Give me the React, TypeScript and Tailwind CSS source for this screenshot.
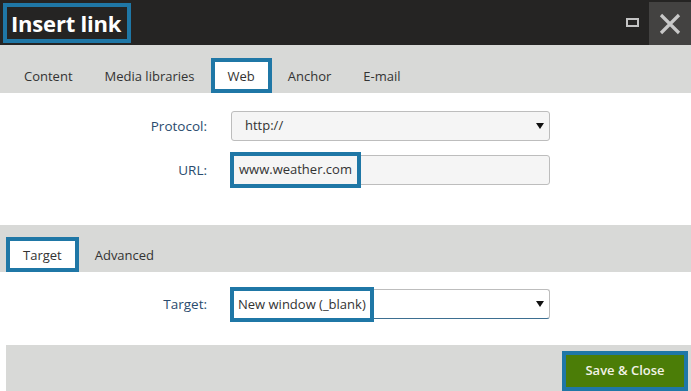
const font = { fontFamily: '"Open Sans", "Noto Sans", sans-serif' };

function Tab({ label, active }: { label: string; active?: boolean }) {
  return (
    <div
      className={`h-[35px] flex items-center pt-[3px] text-[13px] text-[#333] ${
        active ? 'bg-white border-4 border-[#1f77a6] px-[13px]' : 'px-[16px]'
      }`}
    >
      {label}
    </div>
  );
}

function Caret() {
  return (
    <svg width="8" height="6" viewBox="0 0 8 6" className="absolute right-[6px] top-[12px]">
      <path d="M0 0 H8 L4 6 Z" fill="#111" />
    </svg>
  );
}

function Row({ label, children }: { label: string; children: React.ReactNode }) {
  return (
    <div className="flex items-center h-[30px]">
      <div className="w-[207px] text-right text-[13.5px] text-[#2a4b6e]">{label}</div>
      <div className="ml-[24px] relative">{children}</div>
    </div>
  );
}

export default function App() {
  return (
    <div className="w-[691px] h-[391px] bg-white overflow-hidden flex flex-col" style={font}>
      {/* header */}
      <div className="h-[45px] bg-[#252423] flex items-start shrink-0">
        <div className="mt-[3px] ml-[3px] h-[40px] border-4 border-[#1f77a6] flex items-center pl-[4px] pr-[6px]">
          <span className="text-white font-bold text-[22px] leading-none tracking-[-0.2px]">Insert link</span>
        </div>
        <div className="flex-1" />
        <div className="h-[45px] flex items-center mr-[10px]">
          <div className="w-[13px] h-[9px] border-2 border-[#c4c4c4]" />
        </div>
        <div className="mt-[2px] w-[42px] h-[43px] bg-[#434241] flex items-center justify-center">
          <svg width="22" height="22" viewBox="0 0 22 22">
            <path d="M2 2 L20 20 M20 2 L2 20" stroke="#c8c8c8" strokeWidth="3.2" />
          </svg>
        </div>
      </div>

      {/* tabs */}
      <div className="h-[48px] bg-[#d8d9d7] flex items-end pl-[8px] shrink-0">
        <Tab label="Content" />
        <Tab label="Media libraries" />
        <Tab label="Web" active />
        <Tab label="Anchor" />
        <Tab label="E-mail" />
      </div>

      <div className="h-[132px] pt-[18px] flex flex-col gap-[14px] shrink-0">
        <Row label="Protocol:">
          <div className="w-[319px] h-[30px] bg-[#f5f5f5] border border-[#bdbdbd] rounded-[3px] flex items-center pl-[13px] text-[13px] text-[#333]">
            http://
          </div>
          <Caret />
        </Row>
        <Row label="URL:">
          <div className="w-[319px] h-[30px] bg-[#f5f5f5] border border-[#bdbdbd] rounded-[3px]" />
          <div className="absolute -left-[1px] -top-[3px] h-[36px] border-4 border-[#1f77a6] bg-[#f5f5f5] flex items-center px-[5px] text-[13px] text-[#333]">
            www.weather.com
          </div>
        </Row>
      </div>

      {/* second tabs */}
      <div className="h-[47px] bg-[#d8d9d7] flex items-end pl-[6px] shrink-0">
        <Tab label="Target" active />
        <Tab label="Advanced" />
      </div>

      <div className="h-[73px] pt-[17px] shrink-0">
        <Row label="Target:">
          <div className="w-[319px] h-[30px] bg-white border border-[#bdbdbd] border-b-[#3d6f91] rounded-[3px]" />
          <Caret />
          <div className="absolute -left-[1px] -top-[2px] h-[35px] border-4 border-[#1f77a6] bg-white flex items-center px-[4px] text-[13px] text-[#333]">
            New window (_blank)
          </div>
        </Row>
      </div>

      {/* footer */}
      <div className="flex-1 ml-[6px] bg-[#d8d9d7] flex justify-end items-start pt-[6px] pr-[3px]">
        <div className="border-4 border-[#1f77a6] h-[40px] w-[126px] bg-[#4b7d07] flex items-center justify-center">
          <span className="text-[#f2f2e6] font-semibold text-[13px]">Save &amp; Close</span>
        </div>
      </div>
    </div>
  );
}
